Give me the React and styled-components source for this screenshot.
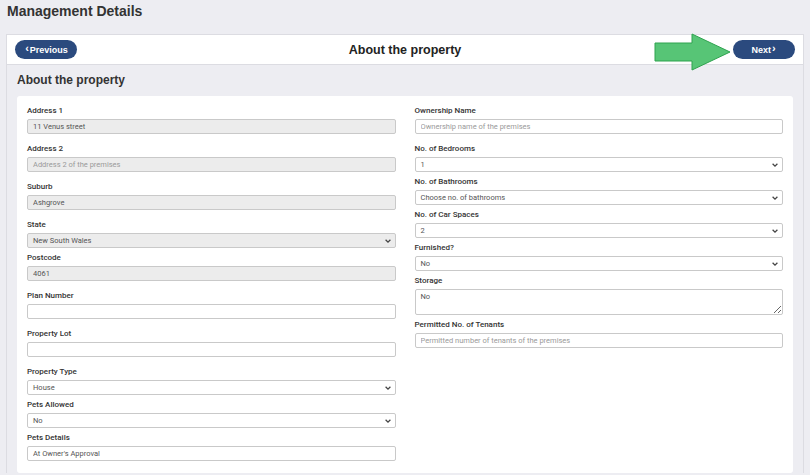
import React from "react";
import styled, { createGlobalStyle } from "styled-components";

const GlobalStyle = createGlobalStyle`
  html, body {
    margin: 0;
    padding: 0;
    background: #ededf2;
    font-family: "Liberation Sans", Arial, sans-serif;
    color: #333;
  }
  * { box-sizing: border-box; }
`;

const leftFields = [
  { label: "Address 1", type: "input", value: "11 Venus street", readOnly: true },
  { label: "Address 2", type: "input", placeholder: "Address 2 of the premises", readOnly: true },
  { label: "Suburb", type: "input", value: "Ashgrove", readOnly: true },
  { label: "State", type: "select", value: "New South Wales", readOnly: true },
  { label: "Postcode", type: "input", value: "4061", readOnly: true },
  { label: "Plan Number", type: "input", value: "" },
  { label: "Property Lot", type: "input", value: "" },
  { label: "Property Type", type: "select", value: "House" },
  { label: "Pets Allowed", type: "select", value: "No" },
  { label: "Pets Details", type: "input", value: "At Owner's Approval" },
];

const rightFields = [
  { label: "Ownership Name", type: "input", placeholder: "Ownership name of the premises" },
  { label: "No. of Bedrooms", type: "select", value: "1" },
  { label: "No. of Bathrooms", type: "select", value: "Choose no. of bathrooms" },
  { label: "No. of Car Spaces", type: "select", value: "2" },
  { label: "Furnished?", type: "select", value: "No" },
  { label: "Storage", type: "textarea", value: "No" },
  { label: "Permitted No. of Tenants", type: "input", placeholder: "Permitted number of tenants of the premises" },
];

function Chevron() {
  return (
    <ChevronIcon viewBox="0 0 10 10">
      <path d="M2 3.5 L5 6.5 L8 3.5" fill="none" stroke="#444" strokeWidth="1.6" />
    </ChevronIcon>
  );
}

function Field({ field }) {
  const { label, type, value, placeholder, readOnly } = field;
  return (
    <FieldWrap $tight={type !== "input"}>
      <Label>{label}</Label>
      {type === "input" && (
        <Input readOnly $grey={readOnly} defaultValue={value} placeholder={placeholder} />
      )}
      {type === "select" && (
        <SelectBox $grey={readOnly}>
          <span>{value}</span>
          <Chevron />
        </SelectBox>
      )}
      {type === "textarea" && <TextArea readOnly defaultValue={value} />}
    </FieldWrap>
  );
}

function App() {
  return (
    <>
      <GlobalStyle />
      <Page>
        <PageTitle>Management Details</PageTitle>
        <Panel>
          <Header>
            <NavButton>
              <Caret>‹</Caret>Previous
            </NavButton>
            <HeaderTitle>About the property</HeaderTitle>
            <NavButton>
              Next<Caret>›</Caret>
            </NavButton>
            <Arrow viewBox="0 0 78 38">
              <polygon
                points="1,10 38,10 38,1 76,19 38,37 38,28 1,28"
                fill="#57c576"
                stroke="#2fa34f"
                strokeWidth="1"
              />
            </Arrow>
          </Header>
          <Body>
            <SectionTitle>About the property</SectionTitle>
            <Card>
              <Column>
                {leftFields.map((f) => (
                  <Field key={f.label} field={f} />
                ))}
              </Column>
              <Column>
                {rightFields.map((f) => (
                  <Field key={f.label} field={f} />
                ))}
              </Column>
            </Card>
          </Body>
        </Panel>
      </Page>
    </>
  );
}

const Page = styled.div`
  height: 475px;
  overflow: hidden;
  padding: 0 6px 0 6px;
`;

const PageTitle = styled.h1`
  margin: 0;
  padding: 3px 0 0 1px;
  height: 34px;
  font-size: 14px;
  line-height: 17px;
  font-weight: bold;
  color: #333;
`;

const Panel = styled.div`
  border: 1px solid #dcdce2;
  border-bottom: none;
  background: #ededf2;
`;

const Header = styled.div`
  position: relative;
  height: 30px;
  background: #fff;
  border-bottom: 1px solid #dcdce2;
  display: flex;
  align-items: center;
  justify-content: space-between;
  padding: 0 8px 0 8px;
`;

const NavButton = styled.button`
  width: 62px;
  height: 19px;
  border: none;
  border-radius: 10px;
  background: #2b4a7e;
  color: #fff;
  font-family: "Liberation Sans", Arial, sans-serif;
  font-weight: bold;
  font-size: 9px;
  display: flex;
  align-items: center;
  justify-content: center;
  padding: 0;
  cursor: pointer;
`;

const Caret = styled.span`
  font-size: 11px;
  line-height: 9px;
  margin: -2px 1px 0 1px;
`;

const HeaderTitle = styled.div`
  font-size: 12.5px;
  font-weight: bold;
  color: #222;
`;

const Arrow = styled.svg`
  position: absolute;
  left: 647px;
  top: -2px;
  width: 78px;
  height: 38px;
`;

const Body = styled.div`
  padding: 0 10px 0 10px;
`;

const SectionTitle = styled.h2`
  margin: 0;
  padding: 8px 0 0 0;
  height: 31px;
  font-size: 12px;
  line-height: 15px;
  font-weight: bold;
  color: #333;
`;

const Card = styled.div`
  background: #fff;
  border-radius: 3px;
  display: grid;
  grid-template-columns: 1fr 1fr;
  column-gap: 19px;
  padding: 10px 10px 1px 10px;
  min-height: 377px;
`;

const Column = styled.div`
  display: flex;
  flex-direction: column;
`;

const FieldWrap = styled.div`
  margin-bottom: ${(p) => (p.$tight ? "5px" : "10px")};
`;

const Label = styled.div`
  font-family: Roboto, "Liberation Sans", Arial, sans-serif;
  font-size: 8px;
  line-height: 10px;
  font-weight: 500;
  color: #333;
  margin-bottom: 3px;
`;

const controlBase = `
  width: 100%;
  height: 15px;
  border: 1px solid #c9c9c9;
  border-radius: 2px;
  font-family: Roboto, "Liberation Sans", Arial, sans-serif;
  font-size: 7.5px;
  color: #555;
  padding: 0 5px;
  outline: none;
`;

const Input = styled.input`
  ${controlBase}
  display: block;
  background: ${(p) => (p.$grey ? "#ececec" : "#fff")};
  &::placeholder {
    color: #9a9a9a;
  }
`;

const SelectBox = styled.div`
  ${controlBase}
  background: ${(p) => (p.$grey ? "#ececec" : "#fff")};
  display: flex;
  align-items: center;
  justify-content: space-between;
  padding-right: 3px;
`;

const ChevronIcon = styled.svg`
  width: 8px;
  height: 8px;
`;

const TextArea = styled.textarea`
  ${controlBase}
  display: block;
  height: 26px;
  padding: 2px 5px;
  resize: vertical;
  background: #fff;
`;

export default App;
